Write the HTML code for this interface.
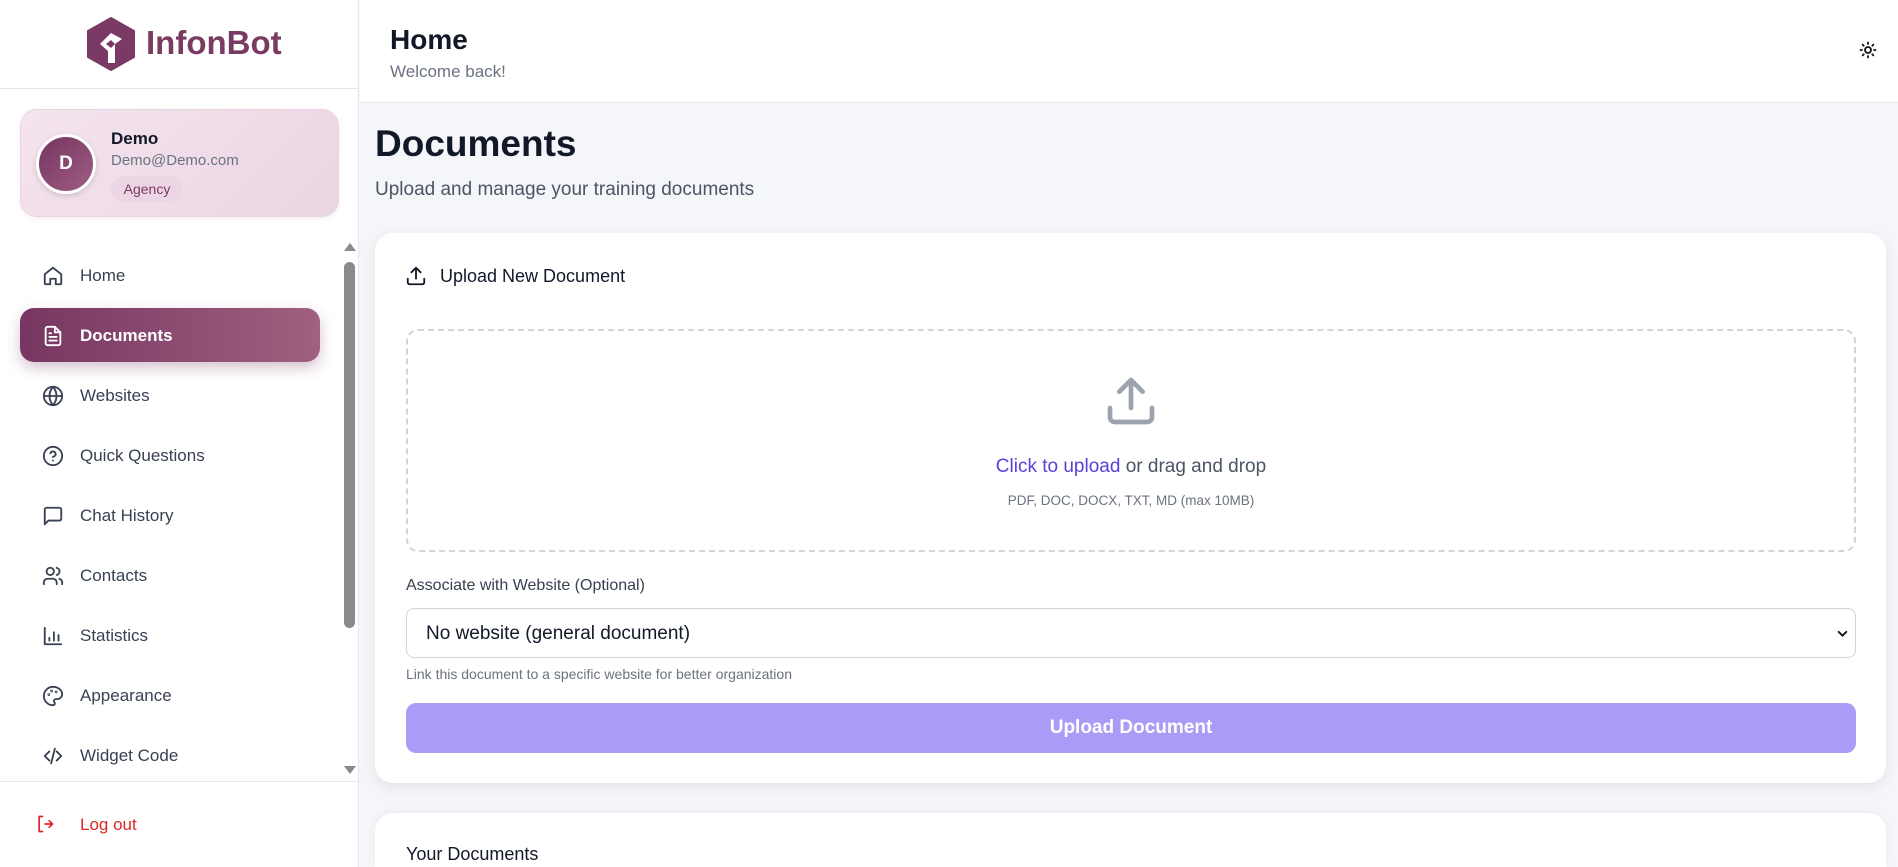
<!DOCTYPE html>
<html><head><meta charset="utf-8"><style>
*{box-sizing:border-box;margin:0;padding:0}
html{width:1898px;height:867px;overflow:hidden}
body{width:1898px;height:867px;overflow:hidden;font-family:"Liberation Sans",sans-serif;background:#f4f6f9;position:relative}
.abs{position:absolute}
.side{left:0;top:0;width:359px;height:867px;background:#fff;border-right:1px solid #e5e7eb}
.nav{position:absolute;left:42px;display:flex;align-items:center;font-size:17px;color:#374151;font-weight:500;height:24px}
.nav svg{width:22px;height:22px;margin-right:16px;fill:none;stroke:#374151;stroke-width:2;stroke-linecap:round;stroke-linejoin:round}
.t{position:absolute;white-space:nowrap;line-height:1}
</style></head><body>
<div class="abs side">
  <svg class="abs" style="left:86px;top:17px" width="50" height="54" viewBox="0 0 50 54">
    <polygon points="25,1 48,14 48,40 25,53 2,40 2,14" fill="#7b3a66" stroke="#7b3a66" stroke-width="2" stroke-linejoin="round"/>
    <path d="M14,27 L25,16 L36,22 L29,27 L29,46 L22,46 L22,34 Z" fill="#fff"/>
    <path d="M20,27 L25,23 L29,27 L25,31 Z" fill="#7b3a66"/>
  </svg>
  <div class="t" style="left:146px;top:26px;font-size:33px;font-weight:bold;color:#7a3b63">InfonBot</div>
  <div class="abs" style="left:0;top:88px;width:359px;height:1px;background:#e5e7eb"></div>
  <div class="abs" style="left:20px;top:109px;width:319px;height:108px;border-radius:17px;background:linear-gradient(135deg,#f4e4ee,#ead5e2);border:1px solid #ead4e1;box-shadow:0 2px 6px rgba(120,60,100,.08)"></div>
  <div class="abs" style="left:36px;top:134px;width:60px;height:60px;border-radius:50%;background:linear-gradient(135deg,#763560,#9d5d83);border:3px solid #fff;box-shadow:0 2px 6px rgba(0,0,0,.15);color:#fff;font-weight:bold;font-size:19px;display:flex;align-items:center;justify-content:center">D</div>
  <div class="t" style="left:111px;top:130px;font-size:17px;font-weight:bold;color:#111827">Demo</div>
  <div class="t" style="left:111px;top:153px;font-size:15px;color:#6b7280">Demo@Demo.com</div>
  <div class="abs" style="left:111px;top:176px;width:72px;height:26px;border-radius:13px;background:#ecd6e3;color:#7a3b63;font-size:14px;font-weight:500;display:flex;align-items:center;justify-content:center">Agency</div>

  <div class="nav" style="top:264px"><svg viewBox="0 0 24 24"><path d="M3 10l9-7 9 7v10a1 1 0 0 1-1 1h-5v-6h-6v6H4a1 1 0 0 1-1-1z"/></svg>Home</div>
  <div class="abs" style="left:20px;top:308px;width:300px;height:54px;border-radius:14px;background:linear-gradient(90deg,#773661,#a0607f);box-shadow:0 6px 14px rgba(120,55,95,.3)"></div>
  <div class="nav" style="top:324px;color:#fff;font-weight:bold"><svg viewBox="0 0 24 24" style="stroke:#fff"><path d="M14 2H6a2 2 0 0 0-2 2v16a2 2 0 0 0 2 2h12a2 2 0 0 0 2-2V8z"/><path d="M14 2v6h6M8 13h8M8 17h8M8 9h2"/></svg>Documents</div>
  <div class="nav" style="top:384px"><svg viewBox="0 0 24 24"><circle cx="12" cy="12" r="10"/><path d="M2 12h20M12 2a15 15 0 0 1 0 20M12 2a15 15 0 0 0 0 20"/></svg>Websites</div>
  <div class="nav" style="top:444px"><svg viewBox="0 0 24 24"><circle cx="12" cy="12" r="10"/><path d="M9.1 9a3 3 0 0 1 5.8 1c0 2-3 3-3 3M12 17h.01"/></svg>Quick Questions</div>
  <div class="nav" style="top:504px"><svg viewBox="0 0 24 24"><path d="M21 15a2 2 0 0 1-2 2H7l-4 4V5a2 2 0 0 1 2-2h14a2 2 0 0 1 2 2z"/></svg>Chat History</div>
  <div class="nav" style="top:564px"><svg viewBox="0 0 24 24"><path d="M16 21v-2a4 4 0 0 0-4-4H6a4 4 0 0 0-4 4v2"/><circle cx="9" cy="7" r="4"/><path d="M22 21v-2a4 4 0 0 0-3-3.9M16 3.1a4 4 0 0 1 0 7.8"/></svg>Contacts</div>
  <div class="nav" style="top:624px"><svg viewBox="0 0 24 24"><path d="M3 3v18h18M8 17v-3M13 17V8M18 17v-6"/></svg>Statistics</div>
  <div class="nav" style="top:684px"><svg viewBox="0 0 24 24"><path d="M12 2a10 10 0 0 0 0 20c1 0 2-.8 2-2 0-.5-.2-1-.5-1.3-.3-.4-.5-.8-.5-1.3 0-1.1.9-2 2-2h2.3A5.6 5.6 0 0 0 22 10c0-4.4-4.5-8-10-8z"/><circle cx="7.5" cy="10.5" r=".5"/><circle cx="10.5" cy="6.5" r=".5"/><circle cx="15.5" cy="7.5" r=".5"/></svg>Appearance</div>
  <div class="nav" style="top:744px"><svg viewBox="0 0 24 24"><path d="M8 7l-5 5 5 5M16 7l5 5-5 5M14 4l-4 16"/></svg>Widget Code</div>

  <div class="abs" style="left:344px;top:243px;width:0;height:0;border-left:6px solid transparent;border-right:6px solid transparent;border-bottom:8px solid #8a8a8a"></div>
  <div class="abs" style="left:344px;top:262px;width:11px;height:366px;border-radius:6px;background:#8a8a8a"></div>
  <div class="abs" style="left:344px;top:766px;width:0;height:0;border-left:6px solid transparent;border-right:6px solid transparent;border-top:8px solid #8a8a8a"></div>
  <div class="abs" style="left:0;top:781px;width:359px;height:1px;background:#e5e7eb"></div>
  <svg class="abs" style="left:35px;top:814px" width="20" height="20" viewBox="0 0 24 24" fill="none" stroke="#dc2626" stroke-width="2" stroke-linecap="round" stroke-linejoin="round"><path d="M9 3H5v18h4M12 12h9M17 8l4 4-4 4"/></svg>
  <div class="t" style="left:80px;top:816px;font-size:17px;font-weight:500;color:#dc2626">Log out</div>
</div>

<div class="abs" style="left:360px;top:0;width:1538px;height:103px;background:#fff;border-bottom:1px solid #e5e7eb"></div>
<div class="t" style="left:390px;top:26px;font-size:28px;font-weight:bold;color:#111827">Home</div>
<div class="t" style="left:390px;top:63px;font-size:17px;color:#6b7280">Welcome back!</div>
<svg class="abs" style="left:1859px;top:41px" width="18" height="18" viewBox="0 0 24 24" fill="none" stroke="#111" stroke-width="2.4" stroke-linecap="round"><circle cx="12" cy="12" r="4"/><path d="M12 2v2M12 20v2M4.9 4.9l1.4 1.4M17.7 17.7l1.4 1.4M2 12h2M20 12h2M4.9 19.1l1.4-1.4M17.7 6.3l1.4-1.4"/></svg>

<div class="t" style="left:375px;top:125px;font-size:37px;font-weight:bold;color:#111827">Documents</div>
<div class="t" style="left:375px;top:180px;font-size:19px;color:#4b5563">Upload and manage your training documents</div>

<div class="abs" style="left:375px;top:233px;width:1511px;height:550px;background:#fff;border-radius:18px;box-shadow:0 4px 14px rgba(0,0,0,.08)"></div>
<svg class="abs" style="left:405px;top:265px" width="22" height="22" viewBox="0 0 24 24" fill="none" stroke="#111827" stroke-width="2" stroke-linecap="round" stroke-linejoin="round"><path d="M21 15v4a2 2 0 0 1-2 2H5a2 2 0 0 1-2-2v-4M17 8l-5-5-5 5M12 3v12"/></svg>
<div class="t" style="left:440px;top:267px;font-size:18px;font-weight:500;color:#111827">Upload New Document</div>
<div class="abs" style="left:406px;top:329px;width:1450px;height:223px;border:2px dashed #d1d5db;border-radius:12px"></div>
<svg class="abs" style="left:1103px;top:373px" width="56" height="56" viewBox="0 0 24 24" fill="none" stroke="#9ca3af" stroke-width="2" stroke-linecap="round" stroke-linejoin="round"><path d="M21 15v4a2 2 0 0 1-2 2H5a2 2 0 0 1-2-2v-4M17 8l-5-5-5 5M12 3v12"/></svg>
<div class="t" style="left:0;width:2262px;top:457px;text-align:center;font-size:19px;font-weight:500;color:#4b5563"><span style="color:#5b3fd9">Click to upload</span> or drag and drop</div>
<div class="t" style="left:0;width:2262px;top:494px;text-align:center;font-size:13.5px;color:#6b7280">PDF, DOC, DOCX, TXT, MD (max 10MB)</div>
<div class="t" style="left:406px;top:578px;font-size:16px;font-weight:500;color:#374151">Associate with Website (Optional)</div>
<div class="abs" style="left:406px;top:608px;width:1450px;height:50px;border:1px solid #d1d5db;border-radius:8px"></div>
<div class="t" style="left:426px;top:624px;font-size:19px;color:#111827">No website (general document)</div>
<svg class="abs" style="left:1836px;top:627px" width="13" height="13" viewBox="0 0 24 24" fill="none" stroke="#111" stroke-width="3.5" stroke-linecap="round" stroke-linejoin="round"><path d="M5 9l7 7 7-7"/></svg>
<div class="t" style="left:406px;top:667px;font-size:14px;color:#6b7280">Link this document to a specific website for better organization</div>
<div class="abs" style="left:406px;top:703px;width:1450px;height:50px;border-radius:10px;background:#a89cf7;color:#fff;font-size:19px;font-weight:bold;display:flex;align-items:center;justify-content:center">Upload Document</div>

<div class="abs" style="left:375px;top:813px;width:1511px;height:54px;background:#fff;border-radius:18px 18px 0 0;box-shadow:0 -2px 10px rgba(0,0,0,.04)"></div>
<div class="t" style="left:406px;top:845px;font-size:18px;font-weight:500;color:#111827">Your Documents</div>
</body></html>
